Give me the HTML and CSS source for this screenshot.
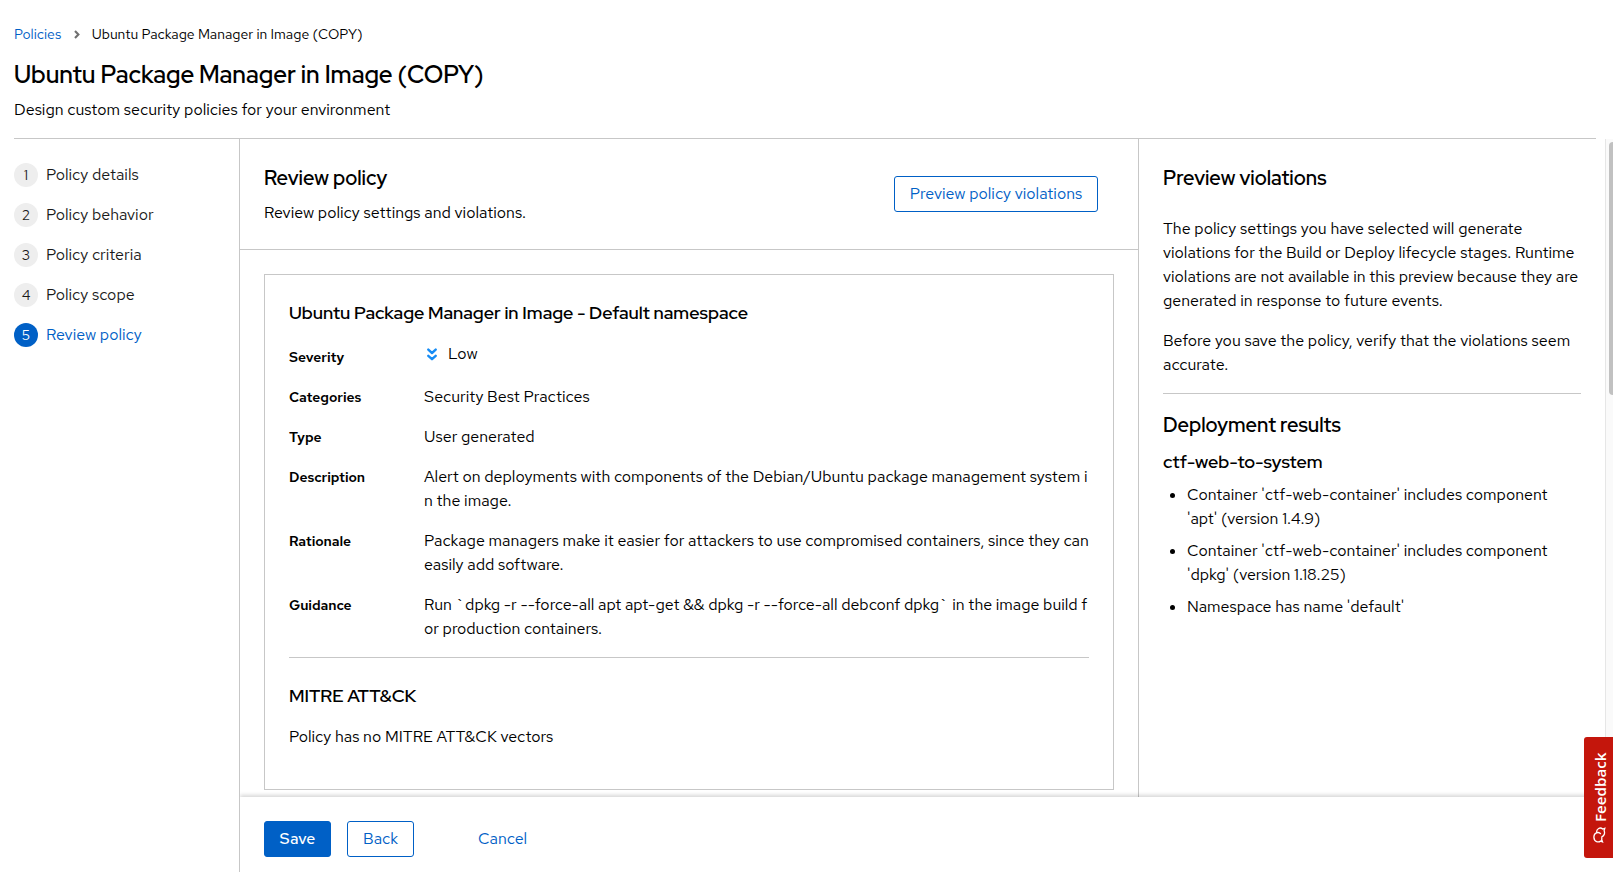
FILE: index.html
```
<!DOCTYPE html>
<html lang="en">
<head>
<meta charset="utf-8">
<title>Review policy</title>
<link rel="stylesheet" href="styles.css">
</head>
<body>
<div class="page">
  <header class="page-header">
    <nav class="breadcrumb">
      <a class="crumb-link" href="#">Policies</a>
      <svg class="crumb-arrow" viewBox="0 0 6 9"><path d="M1 1l3.400 3.500L1 8"/></svg>
      <span>Ubuntu Package Manager in Image (COPY)</span>
    </nav>
    <h1 class="page-title">Ubuntu Package Manager in Image (COPY)</h1>
    <p class="page-desc">Design custom security policies for your environment</p>
  </header>

  <div class="wizard">
    <ol class="steps">
      <li class="step"><span class="num">1</span><span>Policy details</span></li>
      <li class="step"><span class="num">2</span><span>Policy behavior</span></li>
      <li class="step"><span class="num">3</span><span>Policy criteria</span></li>
      <li class="step"><span class="num">4</span><span>Policy scope</span></li>
      <li class="step current"><span class="num">5</span><span>Review policy</span></li>
    </ol>

    <div class="content">
      <div class="columns">
        <main class="review">
          <div class="review-head">
            <div>
              <h2 class="h-md">Review policy</h2>
              <p class="review-desc">Review policy settings and violations.</p>
            </div>
            <button class="btn outline">Preview policy violations</button>
          </div>
          <section class="card">
            <h3 class="h-sm card-title">Ubuntu Package Manager in Image - Default namespace</h3>
            <dl class="details">
              <dt class="severity-label">Severity</dt>
              <dd class="severity"><svg class="chevrons" viewBox="0 0 10 13"><path d="M1.3 1.6L5 5l3.7-3.4M1.3 7.8L5 11.2l3.7-3.4"/></svg><span>Low</span></dd>
              <dt>Categories</dt><dd>Security Best Practices</dd>
              <dt>Type</dt><dd>User generated</dd>
              <dt>Description</dt>
              <dd>Alert on deployments with components of the Debian/Ubuntu package management system i<br>n the image.</dd>
              <dt>Rationale</dt>
              <dd>Package managers make it easier for attackers to use compromised containers, since they can<br>easily add software.</dd>
              <dt>Guidance</dt>
              <dd class="guidance">Run `dpkg -r --force-all apt apt-get &amp;&amp; dpkg -r --force-all debconf dpkg` in the image build f<br>or production containers.</dd>
            </dl>
            <hr class="rule">
            <h3 class="h-sm mitre-title">MITRE ATT&amp;CK</h3>
            <p class="mitre-text">Policy has no MITRE ATT&amp;CK vectors</p>
          </section>
        </main>

        <aside class="preview">
          <h2 class="h-md preview-title">Preview violations</h2>
          <p class="preview-text">The policy settings you have selected will generate<br>violations for the Build or Deploy lifecycle stages. Runtime<br>violations are not available in this preview because they are<br>generated in response to future events.</p>
          <p class="preview-text">Before you save the policy, verify that the violations seem<br>accurate.</p>
          <hr class="rule">
          <h2 class="h-md results-title">Deployment results</h2>
          <h3 class="h-sm deployment">ctf-web-to-system</h3>
          <ul class="results">
            <li>Container 'ctf-web-container' includes component<br>'apt' (version 1.4.9)</li>
            <li>Container 'ctf-web-container' includes component<br>'dpkg' (version 1.18.25)</li>
            <li>Namespace has name 'default'</li>
          </ul>
        </aside>

        <div class="track"><div class="thumb"></div></div>
      </div>

      <footer class="actions">
        <button class="btn primary">Save</button>
        <button class="btn outline">Back</button>
        <button class="btn link">Cancel</button>
      </footer>
    </div>
  </div>
</div>

<button class="feedback">
  <svg class="feedback-icon" viewBox="0 0 13 16"><path transform="translate(13 0) rotate(90)" d="M6 8.600c-.8.3-1.600.3-2.400.1L1.200 9.500l.7-1.900C.4 5.500 1 1.200 5.600.9c4.600-.2 6.300 4.600 3.400 6.900M10.600 3.600c3.700-.2 5.700 3.500 3.400 6.100l.7 2.100-2.500-.7c-2.600 1.200-5.600-.2-6.100-2.700"/></svg>
  <span>Feedback</span>
</button>
</body>
</html>
```
FILE: styles.css
```
* { box-sizing: border-box; }
html, body { height: 100%; }
body {
  margin: 0;
  overflow: hidden;
  background: #fff;
  color: #000;
  font: 16px/24px "Red Hat Text", Inter, "Open Sans", sans-serif;
}
h1, h2, h3, p, dl, dd, ol, ul { margin: 0; padding: 0; font-weight: 400; }
h1, h2, h3 { font-family: "Red Hat Display", "Red Hat Text", Inter, sans-serif; }
button { font: inherit; }

.page { display: flex; flex-direction: column; height: 100vh; }

/* Page header */
.page-header {
  height: 139px;
  margin: 0 17px 0 14px;
  padding-top: 24px;
  border-bottom: 1px solid #c7c7c7;
}
.breadcrumb { display: flex; align-items: center; font-size: 14px; line-height: 21px; }
.crumb-link { color: #0060c6; text-decoration: none; }
.crumb-arrow { width: 6px; height: 9px; margin: 0 11.5px 0 13px; fill: none; stroke: #707070; stroke-width: 2.1; }
.page-title { margin-top: 14px; font-size: 24px; font-weight: 600; line-height: 31px; letter-spacing: -.02px; }
.page-desc { margin-top: 8px; }

/* Wizard steps */
.wizard { display: flex; flex: 1; min-height: 0; }
.steps { display: flex; flex-direction: column; gap: 16px; width: 239px; padding: 24px 0 0 14px; color: #1a1a1a; list-style: none; }
.step { display: flex; gap: 8px; height: 24px; }
.num { width: 24px; height: 24px; border-radius: 50%; background: #eee; font-size: 14px; text-align: center; }
.current { color: #0060c6; }
.current .num { background: #0060c6; color: #fff; }

.content { display: flex; flex: 1; flex-direction: column; min-width: 0; border-left: 1px solid #c7c7c7; }
.columns { display: flex; flex: 1; min-height: 0; overflow: hidden; }

/* Review column */
.review { width: 898px; }
.review-head {
  display: flex;
  justify-content: space-between;
  align-items: flex-start;
  height: 111px;
  padding: 26px 40px 0 24px;
  border-bottom: 1px solid #c7c7c7;
}
.review-head .btn { width: 204px; margin-top: 11px; }
.review-desc { margin-top: 10px; }
.h-md { font-size: 20px; font-weight: 600; line-height: 26px; }
.h-sm { font-size: 18px; font-weight: 600; line-height: 23px; }
.card { height: 516px; margin: 24px; padding: 26px 24px 0; border: 1px solid #c7c7c7; }
.details { display: grid; grid-template-columns: 135px 1fr; row-gap: 16px; margin-top: 22px; white-space: nowrap; }
.details dt { padding-top: 2px; font-size: 14px; font-weight: 600; line-height: 21px; letter-spacing: -.08px; }
.details .severity-label { padding: 1px 0; }
.severity { display: flex; height: 24px; margin-top: -4px; padding-left: 3px; }
.chevrons { width: 10px; height: 13px; margin: 6px 11px 0 0; fill: none; stroke: #168cf5; stroke-width: 2.4; stroke-linecap: round; stroke-linejoin: round; }
.guidance { letter-spacing: -.02px; }
.rule { height: 1px; margin: 16px 0 0; border: 0; background: #c7c7c7; }
.mitre-title { margin-top: 26px; }
.mitre-text { margin-top: 18px; }

/* Preview column */
.preview { width: 467px; padding: 26px 24px 0; border-left: 1px solid #c7c7c7; white-space: nowrap; }
.preview-title { margin-bottom: 26px; }
.preview-text + .preview-text { margin-top: 16px; }
.results-title { margin-top: 18px; }
.deployment { margin-top: 12px; }
.results { display: flex; flex-direction: column; gap: 8px; margin-top: 10px; padding-left: 24px; }

.track { flex: 1; padding: 3px 0 0 3px; border-left: 1px solid #e6e6e6; background: #fafafa; }
.thumb { height: 253px; border-radius: 4px 0 0 4px; background: #c1c1c1; }

/* Footer */
.actions {
  display: flex;
  gap: 16px;
  height: 75px;
  padding: 24px;
  background: #fff;
  box-shadow: 0 -2px 4px rgba(0, 0, 0, .16);
  clip-path: inset(-8px 0 0 0);
}
.btn { height: 36px; padding: 0; border: 1px solid #0060c6; border-radius: 3px; background: #fff; color: #0060c6; line-height: 24px; white-space: nowrap; }
.actions .btn { width: 67px; }
.actions .primary { background: #0060c6; color: #fff; font-weight: 500; }
.actions .link { width: 81px; margin-left: 32px; border-color: transparent; }

/* Feedback tab, pinned to the window edge over the page */
.feedback {
  position: absolute;
  right: 0;
  top: 737px;
  display: flex;
  align-items: center;
  gap: 5px;
  width: 29px;
  height: 121px;
  padding: 15px 2px 15px 0;
  border: 0;
  border-radius: 0 3px 3px 0;
  background: #c4160c;
  color: #fff;
  font: 600 15.200px/20px "Open Sans", sans-serif;
  writing-mode: vertical-rl;
  transform: rotate(180deg);
}
.feedback-icon { flex: none; width: 13px; height: 16px; fill: none; stroke: #fff; stroke-width: 1.3; }
```
